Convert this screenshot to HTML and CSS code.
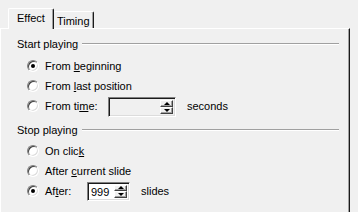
FILE: index.html
```html
<!DOCTYPE html>
<html lang="en">
<head>
    <meta charset="UTF-8">
    <title>Custom Animation - Timing</title>
    <link rel="stylesheet" href="styles.css">
</head>
<body>
    <div class="dialog">
        <div class="tabs">
            <div class="tab active">Effect</div>
            <div class="tab">Timing</div>
        </div>

        <div class="panel">
            <div class="group-title"><span>Start playing</span><div class="etch"></div></div>

            <div class="row">
                <span class="radio checked"></span>
                <span class="label">From <u>b</u>eginning</span>
            </div>
            <div class="row">
                <span class="radio"></span>
                <span class="label">From <u>l</u>ast position</span>
            </div>
            <div class="row">
                <span class="radio"></span>
                <span class="label label-time">From ti<u>m</u>e:</span>
                <div class="spin-box disabled time-box">
                    <span class="value"></span>
                    <div class="spin">
                        <div class="spin-btn"><span class="arrow-up"></span></div>
                        <div class="spin-btn"><span class="arrow-down"></span></div>
                    </div>
                </div>
                <span class="unit">seconds</span>
            </div>

            <div class="group-title second"><span>Stop playing</span><div class="etch"></div></div>

            <div class="row">
                <span class="radio"></span>
                <span class="label">On clic<u>k</u></span>
            </div>
            <div class="row">
                <span class="radio"></span>
                <span class="label">After <u>c</u>urrent slide</span>
            </div>
            <div class="row">
                <span class="radio checked"></span>
                <span class="label label-after">Af<u>t</u>er:</span>
                <div class="spin-box slides-box">
                    <span class="value">999</span>
                    <div class="spin">
                        <div class="spin-btn"><span class="arrow-up"></span></div>
                        <div class="spin-btn"><span class="arrow-down"></span></div>
                    </div>
                </div>
                <span class="unit">slides</span>
            </div>
        </div>
    </div>
</body>
</html>
```

FILE: styles.css
```css
html, body {
    margin: 0;
    padding: 0;
}
body {
    width: 358px;
    height: 212px;
    overflow: hidden;
    background: #f0f0f0;
    font-family: 'Liberation Sans', Arial, sans-serif;
    font-size: 11px;
    color: #000;
}
u {
    text-decoration: underline;
    text-underline-offset: 1px;
}
.dialog {
    width: 350px;
}
.tabs {
    height: 28px;
    padding-left: 8px;
    display: flex;
    align-items: flex-end;
    box-sizing: border-box;
}
.tab {
    height: 17px;
    padding: 0 3px 0 3px;
    line-height: 19px;
    border-top: 1px solid #fff;
    border-right: 1px solid #1a1a1a;
    box-shadow: inset -1px 0 #a0a0a0;
    border-radius: 2px 2px 0 0;
    box-sizing: border-box;
}
.tab.active {
    position: relative;
    z-index: 1;
    height: 21px;
    margin-bottom: -1px;
    padding: 0 8px;
    line-height: 18px;
    border-left: 1px solid #fff;
    background: #f0f0f0;
}
.panel {
    height: 184px;
    border-top: 1px solid #fff;
    border-left: 1px solid #fff;
    border-right: 1px solid #1a1a1a;
    box-shadow: inset -1px 0 #a0a0a0;
    padding: 5px 10px 0 16px;
    box-sizing: border-box;
}
.group-title {
    height: 20px;
    display: flex;
    align-items: center;
}
.group-title.second {
    margin-top: 4px;
}
.etch {
    flex: 1;
    margin-left: 4px;
    height: 1px;
    background: #a0a0a0;
    border-bottom: 1px solid #fff;
}
.row {
    height: 20px;
    display: flex;
    align-items: center;
    padding-left: 10px;
}
.group-title + .row {
    margin-top: 2px;
}
.group-title.second + .row {
    margin-top: 1px;
}
.radio {
    position: relative;
    width: 12px;
    height: 12px;
    border-radius: 50%;
    box-sizing: border-box;
    border: 1px solid;
    border-color: #808080 #fff #fff #808080;
    box-shadow: inset 1px 1px #404040, inset -1px -1px #dcdcdc;
    background: #fff;
    flex: none;
}
.radio.checked::after {
    content: '';
    position: absolute;
    left: 3px;
    top: 3px;
    width: 4px;
    height: 4px;
    border-radius: 50%;
    background: #000;
}
.label {
    margin-left: 6px;
    white-space: nowrap;
}
.label-time {
    width: 63px;
}
.label-after {
    width: 42px;
}
.spin-box {
    display: flex;
    height: 20px;
    border: 1px solid;
    border-color: #808080 #fff #fff #808080;
    box-shadow: inset 1px 1px #1a1a1a, inset -1px -1px #dcdcdc;
    background: #fff;
    box-sizing: border-box;
    padding: 2px 2px 2px 3px;
}
.spin-box.disabled {
    background: #f0f0f0;
}
.time-box {
    width: 68px;
    margin-top: 2px;
}
.slides-box {
    width: 43px;
    height: 19px;
}
.value {
    flex: 1;
    line-height: 14px;
}
.spin {
    width: 13px;
    display: flex;
    flex-direction: column;
}
.spin-btn {
    flex: 1;
    display: flex;
    align-items: center;
    justify-content: center;
    background: #f0f0f0;
    border-top: 1px solid #fff;
    border-left: 1px solid #fff;
    border-right: 1px solid #404040;
    border-bottom: 1px solid #404040;
    box-shadow: inset -1px -1px #a0a0a0;
    box-sizing: border-box;
}
.arrow-up, .arrow-down {
    width: 0;
    height: 0;
    border-left: 3px solid transparent;
    border-right: 3px solid transparent;
}
.arrow-up {
    border-bottom: 3px solid #000;
}
.arrow-down {
    border-top: 3px solid #000;
}
.unit {
    margin-left: 11px;
}
```
